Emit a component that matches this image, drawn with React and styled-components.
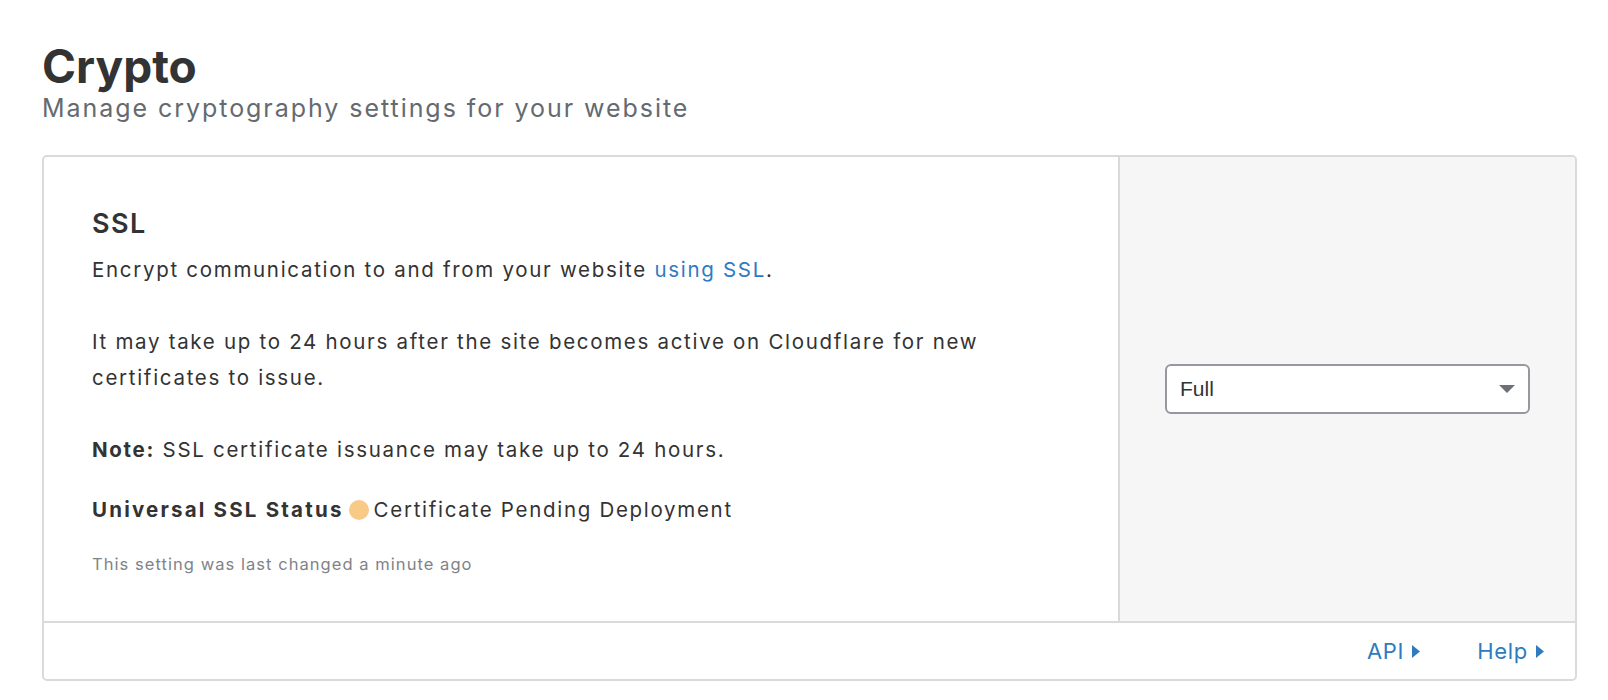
import React from 'react';
import styled, { createGlobalStyle } from 'styled-components';

const GlobalStyle = createGlobalStyle`
  html, body {
    margin: 0;
    padding: 0;
    background: #fff;
  }

  body {
    font-family: 'Inter', 'Noto Sans', sans-serif;
    color: #333;
  }
`;

const Page = styled.div`
  padding: 38px 31px 0 42px;
`;

const Title = styled.h1`
  margin: 0;
  font-size: 46px;
  line-height: 56px;
  font-weight: 700;
  color: #333;
`;

const Subtitle = styled.p`
  margin: 0 0 33px;
  font-size: 25px;
  line-height: 28px;
  letter-spacing: 1.95px;
  color: #646a70;
`;

const Card = styled.section`
  border: 2px solid #dadada;
  border-radius: 5px;
  overflow: hidden;
`;

const CardBody = styled.div`
  display: grid;
  grid-template-columns: 1fr 455px;
`;

const Content = styled.div`
  padding: 51px 48px 45px 48px;
  border-right: 2px solid #dadada;
`;

const Heading = styled.h2`
  margin: 0 0 12px;
  font-size: 27px;
  line-height: 32px;
  font-weight: 600;
  letter-spacing: 1.4px;
  color: #333;
`;

const Text = styled.p`
  margin: 0 0 ${(p) => p.$gap || 36}px;
  max-width: 920px;
  font-size: 20.5px;
  line-height: 36px;
  letter-spacing: 1.7px;
  color: #333;

  strong {
    font-weight: 700;
  }
`;

const Link = styled.a`
  color: #2f7bbf;
  text-decoration: none;
`;

const Status = styled.div`
  display: flex;
  align-items: center;
  gap: 5px;
  margin: 0 0 24px;
  font-size: 20.5px;
  line-height: 36px;
  letter-spacing: 1.7px;
  color: #333;

  strong {
    font-weight: 700;
    letter-spacing: 2.2px;
  }
`;

const Dot = styled.span`
  width: 20px;
  height: 20px;
  border-radius: 50%;
  background: ${(p) => p.$color};
`;

const Meta = styled.p`
  margin: 0;
  font-size: 16.5px;
  line-height: 24px;
  letter-spacing: 1.05px;
  color: #808388;
`;

const Side = styled.div`
  background: #f6f6f6;
  display: flex;
  align-items: center;
  justify-content: center;
`;

const Select = styled.div`
  width: 365px;
  height: 50px;
  box-sizing: border-box;
  border: 2px solid #95989c;
  border-radius: 6px;
  background: #fff;
  display: flex;
  align-items: center;
  justify-content: space-between;
  padding: 0 13px 0 13px;
  font-family: 'Liberation Sans', Arial, sans-serif;
  font-size: 21px;
  color: #333;
`;

const Footer = styled.div`
  height: 56px;
  border-top: 2px solid #dadada;
  display: flex;
  align-items: center;
  justify-content: flex-end;
  gap: 57px;
  padding-right: 31px;
`;

const FooterLink = styled.a`
  display: flex;
  align-items: center;
  gap: 8px;
  font-size: 22px;
  letter-spacing: 0.7px;
  color: #2f7bbf;
  text-decoration: none;
`;

const Caret = () => (
  <svg width="8" height="13" viewBox="0 0 8 13">
    <polygon points="0,0 8,6.5 0,13" fill="#2f7bbf" />
  </svg>
);

const DropArrow = () => (
  <svg width="16" height="8" viewBox="0 0 16 8">
    <polygon points="0,0 16,0 8,8" fill="#6d7074" />
  </svg>
);

export default function App() {
  return (
    <Page>
      <GlobalStyle />
      <Title>Crypto</Title>
      <Subtitle>Manage cryptography settings for your website</Subtitle>

      <Card>
        <CardBody>
          <Content>
            <Heading>SSL</Heading>
            <Text>
              Encrypt communication to and from your website <Link href="#">using SSL</Link>.
            </Text>
            <Text>
              It may take up to 24 hours after the site becomes active on Cloudflare for new certificates to issue.
            </Text>
            <Text $gap={24}>
              <strong>Note:</strong> SSL certificate issuance may take up to 24 hours.
            </Text>
            <Status>
              <strong>Universal SSL Status</strong>
              <Dot $color="#f7ca87" />
              <span>Certificate Pending Deployment</span>
            </Status>
            <Meta>This setting was last changed a minute ago</Meta>
          </Content>

          <Side>
            <Select>
              <span>Full</span>
              <DropArrow />
            </Select>
          </Side>
        </CardBody>

        <Footer>
          <FooterLink href="#">
            API <Caret />
          </FooterLink>
          <FooterLink href="#">
            Help <Caret />
          </FooterLink>
        </Footer>
      </Card>
    </Page>
  );
}
